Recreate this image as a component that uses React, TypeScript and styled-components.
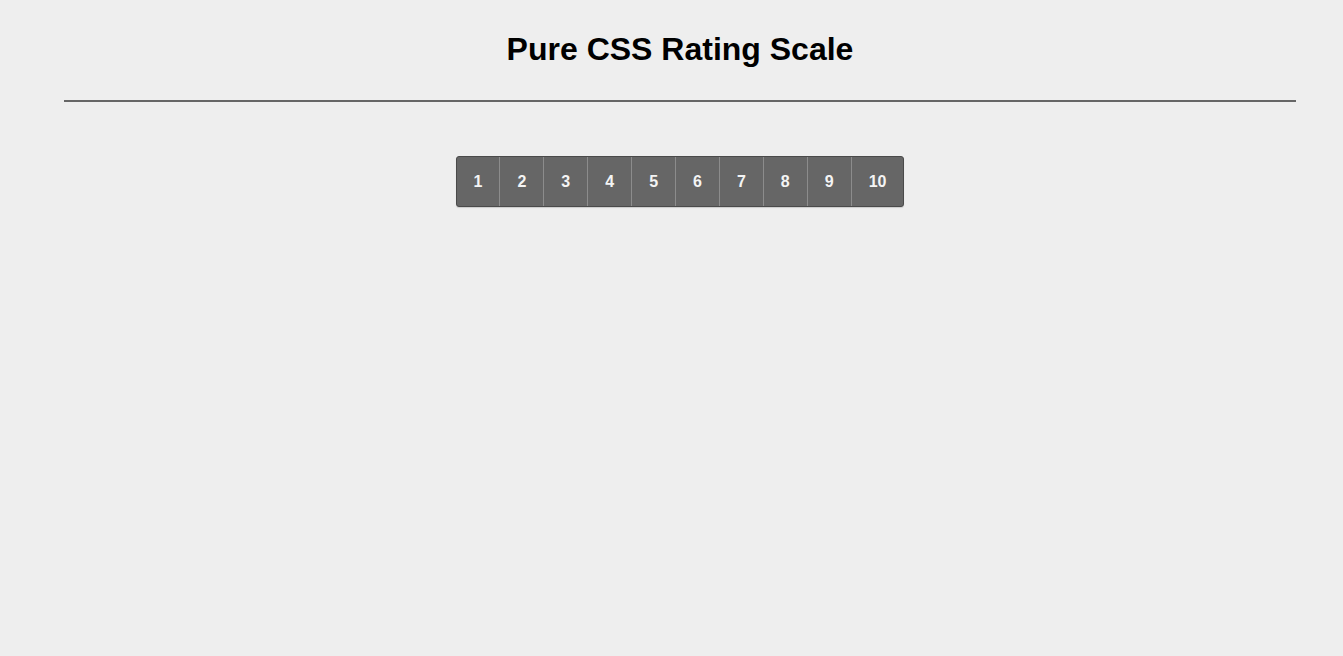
import React from "react";
import styled, { createGlobalStyle } from "styled-components";

const GlobalStyle = createGlobalStyle`
  html, body {
    margin: 0;
    padding: 0;
    background: #eeeeee;
  }
  body {
    font-family: "Liberation Sans", Arial, sans-serif;
  }
`;

const Page = styled.main`
  padding: 0 47px 0 64px;
  min-height: 656px;
  box-sizing: border-box;
`;

const Title = styled.h1`
  margin: 31px 0 0;
  font-size: 32px;
  line-height: 37px;
  font-weight: bold;
  text-align: center;
  color: #000;
`;

const Rule = styled.hr`
  margin: 32px 0 0;
  height: 2px;
  border: 0;
  background: #666666;
`;

const ScaleWrap = styled.div`
  display: flex;
  justify-content: center;
  margin-top: 54px;
`;

const Scale = styled.div`
  display: flex;
  border: 1px solid #4a4a4a;
  border-radius: 3px;
  background: #666666;
  box-shadow: 0 1px 1px rgba(0, 0, 0, 0.15);
  overflow: hidden;
`;

const Step = styled.label<{ $first?: boolean }>`
  display: flex;
  align-items: center;
  justify-content: center;
  height: 49px;
  padding: 1px 17px 0;
  box-sizing: border-box;
  border-left: 1px solid ${(p) => (p.$first ? "transparent" : "#8c8c8c")};
  margin-left: ${(p) => (p.$first ? "-1px" : "0")};
  color: #f4f4f4;
  font-size: 16px;
  font-weight: bold;
  cursor: pointer;
`;

export default function App() {
  const steps = Array.from({ length: 10 }, (_, i) => i + 1);
  return (
    <>
      <GlobalStyle />
      <Page>
        <Title>Pure CSS Rating Scale</Title>
        <Rule />
        <ScaleWrap>
          <Scale>
            {steps.map((n, i) => (
              <Step key={n} $first={i === 0}>
                {n}
              </Step>
            ))}
          </Scale>
        </ScaleWrap>
      </Page>
    </>
  );
}
